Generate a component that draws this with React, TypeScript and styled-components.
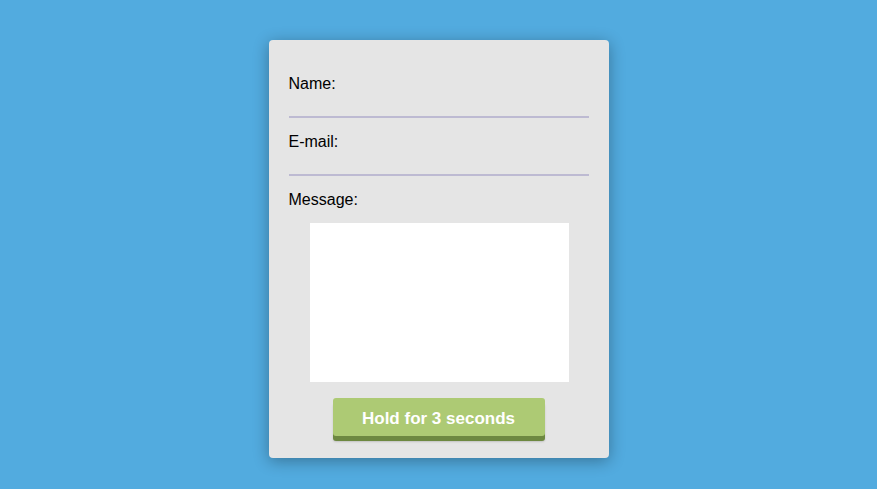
import React from 'react';
import styled, { createGlobalStyle } from 'styled-components';

const GlobalStyle = createGlobalStyle`
  html, body {
    margin: 0;
    padding: 0;
    background: #52abdf;
    min-height: 100%;
  }
  body {
    font-family: "Liberation Sans", Arial, Helvetica, sans-serif;
  }
`;

const Page = styled.div`
  display: flex;
  justify-content: center;
  align-items: flex-start;
  padding-top: 40px;
  min-height: 489px;
  box-sizing: border-box;
`;

const Card = styled.form`
  width: 340px;
  box-sizing: border-box;
  padding: 35px 20px 17px;
  background: #e5e5e5;
  border-radius: 4px;
  box-shadow: 0 3px 16px rgba(0, 0, 0, 0.32);
  display: flex;
  flex-direction: column;
`;

const Label = styled.label`
  display: block;
  font-size: 16px;
  line-height: 18px;
  color: #000;
`;

const Field = styled.div`
  margin-bottom: 15px;
`;

const Line = styled.input<{ $h?: number }>`
  display: block;
  width: 100%;
  height: ${(p) => p.$h || 25}px;
  box-sizing: border-box;
  margin: 0;
  padding: 0;
  border: none;
  border-bottom: 2px solid #bdbad2;
  background: transparent;
  outline: none;
  font: inherit;
`;

const Area = styled.textarea`
  display: block;
  width: 259px;
  height: 159px;
  box-sizing: border-box;
  margin: 14px auto 0 21px;
  border: none;
  background: #fff;
  resize: none;
  outline: none;
`;

const Hold = styled.button`
  align-self: center;
  width: 212px;
  height: 38px;
  margin-top: 16px;
  margin-bottom: 5px;
  padding: 3px 0 0;
  border: none;
  border-radius: 3px;
  background: #adca74;
  box-shadow: 0 5px 0 #6d8841, 0 6px 2px rgba(0, 0, 0, 0.15);
  color: #fff;
  font-family: "Liberation Sans", Arial, Helvetica, sans-serif;
  font-size: 17px;
  font-weight: bold;
  cursor: pointer;
`;

export default function App() {
  return (
    <Page>
      <GlobalStyle />
      <Card onSubmit={(e) => e.preventDefault()}>
        <Field>
          <Label htmlFor="name">Name:</Label>
          <Line id="name" type="text" $h={25} />
        </Field>
        <Field>
          <Label htmlFor="email">E-mail:</Label>
          <Line id="email" type="email" $h={25} />
        </Field>
        <div>
          <Label htmlFor="message">Message:</Label>
          <Area id="message" />
        </div>
        <Hold type="button">Hold for 3 seconds</Hold>
      </Card>
    </Page>
  );
}
